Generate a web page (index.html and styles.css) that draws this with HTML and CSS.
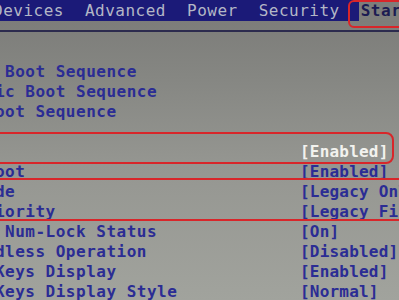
FILE: index.html
```html
<!DOCTYPE html>
<html lang="en">
<head>
    <meta charset="UTF-8">
    <title>Setup Utility - Startup</title>
    <link rel="stylesheet" href="styles.css">
</head>
<body>
    <div class="screen">
        <nav class="menubar">
            <span class="tab">Devices</span>
            <span class="tab">Advanced</span>
            <span class="tab">Power</span>
            <span class="tab">Security</span>
            <span class="tab active">Startup</span>
        </nav>
        <div class="rule"></div>

        <div class="options">
            <div class="row"><span class="label">Primary Boot Sequence</span><span class="value"></span></div>
            <div class="row"><span class="label">Automatic Boot Sequence</span><span class="value"></span></div>
            <div class="row"><span class="label">Error Boot Sequence</span><span class="value"></span></div>
            <div class="row"><span class="label"></span><span class="value"></span></div>
            <div class="row selected"><span class="label">CSM</span><span class="value">[Enabled]</span></div>
            <div class="row"><span class="label">Quick Boot</span><span class="value">[Enabled]</span></div>
            <div class="row"><span class="label">Boot Mode</span><span class="value">[Legacy Only]</span></div>
            <div class="row"><span class="label">Boot Priority</span><span class="value">[Legacy First]</span></div>
            <div class="row"><span class="label">Boot Up Num-Lock Status</span><span class="value">[On]</span></div>
            <div class="row"><span class="label">Keyboardless Operation</span><span class="value">[Disabled]</span></div>
            <div class="row"><span class="label">Option Keys Display</span><span class="value">[Enabled]</span></div>
            <div class="row"><span class="label">Option Keys Display Style</span><span class="value">[Normal]</span></div>
        </div>

        <!-- red annotation marks drawn over the photo -->
        <div class="mark mark-tab"></div>
        <div class="mark mark-csm"></div>
        <div class="mark mark-boot"></div>
    </div>
</body>
</html>
```

FILE: styles.css
```css
* {
    box-sizing: border-box;
}

html, body {
    margin: 0;
    padding: 0;
    overflow: hidden;
}

body {
    width: 399px;
    height: 300px;
    font-family: "DejaVu Sans Mono", "Liberation Mono", monospace;
    font-weight: bold;
    font-size: 16px;
    letter-spacing: 0.5px;
    background: linear-gradient(180deg, #7a7a77 0, #858682 25%, #959691 55%, #a1a39d 100%);
}

.screen {
    position: relative;
    width: 399px;
    height: 300px;
    overflow: hidden;
}

.menubar {
    display: flex;
    gap: 17px;
    height: 21px;
    margin-left: -9px;
    background-color: #1b1a78;
    white-space: nowrap;
}

.tab {
    padding: 0 2px;
    line-height: 21px;
    color: #b3b7c6;
    font-weight: normal;
}

.tab.active {
    background-color: #7e7e7b;
    color: #1c1c52;
    font-weight: bold;
}

.rule {
    height: 2px;
    margin-top: 9px;
    background-color: #2c2b4e;
}

.options {
    margin-top: 30px;
    margin-left: -76px;
}

.row {
    display: grid;
    grid-template-columns: 376px auto;
    height: 20px;
    line-height: 20px;
    white-space: nowrap;
    color: #2b2c94;
}

.row .value {
    letter-spacing: 0.2px;
}

.row.selected .value {
    color: #f2f2ee;
}

.mark {
    position: absolute;
    border: 2px solid #d8262a;
}

.mark-tab {
    left: 348px;
    top: 0;
    width: 70px;
    height: 28px;
    border-radius: 6px;
}

.mark-csm {
    left: -10px;
    top: 132px;
    width: 404px;
    height: 32px;
    border-radius: 8px;
}

.mark-boot {
    left: -10px;
    top: 178px;
    width: 430px;
    height: 43px;
    border-radius: 8px;
}
```
